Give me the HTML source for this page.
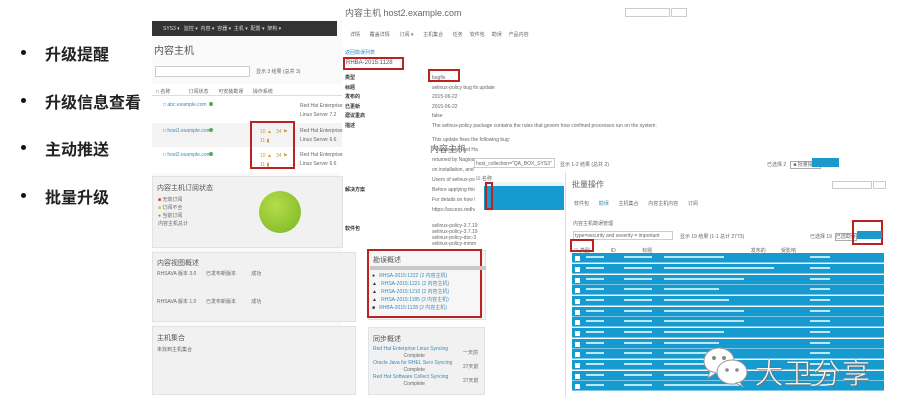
<!DOCTYPE html>
<html><head><meta charset="utf-8"><style>
*{margin:0;padding:0;box-sizing:border-box}
body{width:903px;height:413px;background:#fff;position:relative;overflow:hidden;font-family:"Liberation Sans","Noto Sans CJK SC",sans-serif;color:#444}
.a{position:absolute}
.b{font-size:16px;color:#222;font-weight:bold}
.dot{width:5px;height:5px;border-radius:50%;background:#111}
.s{font-size:5px;color:#666;white-space:nowrap}
.g{background:#f1f1f1;border:1px solid #e2e2e2}
.red{border:2px solid #b22;}
.lnk{color:#3a8ab8}
.row{position:absolute;left:0;width:312px;height:10px;background:#169bd0;border-bottom:1px solid #7cc8e6}
.row i{position:absolute;left:3px;top:3px;width:5px;height:5px;background:#fff}
.row b{position:absolute;top:3px;height:2px;background:#bfe6f5}
</style></head><body>
<!-- bullets -->
<div class="a dot" style="left:21px;top:50px"></div><div class="a b" style="left:45px;top:41px">升级提醒</div>
<div class="a dot" style="left:21px;top:98px"></div><div class="a b" style="left:45px;top:89px">升级信息查看</div>
<div class="a dot" style="left:21px;top:145px"></div><div class="a b" style="left:45px;top:136px">主动推送</div>
<div class="a dot" style="left:21px;top:193px"></div><div class="a b" style="left:45px;top:184px">批量升级</div>

<!-- left screenshot -->
<div class="a" style="left:152px;top:20px;width:190px;height:375px;background:#fafafa"></div>
<div class="a" style="left:152px;top:21px;width:185px;height:15px;background:#333"></div>
<div class="a s" style="left:163px;top:25px;color:#ddd">SYS3 ▾ &nbsp; 监控 ▾ &nbsp;内容 ▾ &nbsp;容器 ▾ &nbsp;主机 ▾ &nbsp;配置 ▾ &nbsp;架构 ▾</div>
<div class="a" style="left:154px;top:42px;font-size:10px;color:#555">内容主机</div>
<div class="a" style="left:155px;top:66px;width:95px;height:11px;border:1px solid #ccc;background:#fff"></div>
<div class="a s" style="left:256px;top:68px">显示 3 结果 (总共 3)</div>
<div class="a" style="left:152px;top:84px;width:190px;height:12px;border-bottom:1px solid #ddd;background:#fff"></div>
<div class="a s" style="left:156px;top:88px">□ 名称 &nbsp; &nbsp; &nbsp; &nbsp; &nbsp; &nbsp; 订阅状态 &nbsp; &nbsp; &nbsp; 可安装勘误 &nbsp; &nbsp; &nbsp; 操作系统</div>
<div class="a" style="left:152px;top:96px;width:190px;height:27px;background:#fff"></div>
<div class="a" style="left:152px;top:123px;width:190px;height:24px;background:#f3f3f3"></div>
<div class="a" style="left:152px;top:147px;width:190px;height:26px;background:#fff"></div>
<div class="a s lnk" style="left:163px;top:102px">□ abc.example.com</div>
<div class="a s lnk" style="left:163px;top:128px">□ host1.example.com</div>
<div class="a s lnk" style="left:163px;top:152px">□ host2.example.com</div>
<div class="a s" style="left:300px;top:102px;line-height:9px">Red Hat Enterprise<br>Linux Server 7.2</div>
<div class="a s" style="left:300px;top:127px;line-height:9px">Red Hat Enterprise<br>Linux Server 6.6</div>
<div class="a s" style="left:300px;top:151px;line-height:9px">Red Hat Enterprise<br>Linux Server 6.6</div>
<div class="a" style="left:209px;top:102px;width:4px;height:4px;border-radius:50%;background:#5a5"></div>
<div class="a" style="left:209px;top:128px;width:4px;height:4px;border-radius:50%;background:#5a5"></div>
<div class="a" style="left:209px;top:152px;width:4px;height:4px;border-radius:50%;background:#5a5"></div>
<div class="a red" style="left:250px;top:121px;width:45px;height:48px"></div>
<div class="a s" style="left:260px;top:128px;color:#c93;line-height:9px">10 ▲ &nbsp; 34 ⚑<br>11 ▮</div>
<div class="a s" style="left:260px;top:152px;color:#c93;line-height:9px">10 ▲ &nbsp; 34 ⚑<br>11 ▮</div>
<div class="a g" style="left:152px;top:176px;width:191px;height:72px"></div>
<div class="a" style="left:157px;top:183px;font-size:7px;color:#555">内容主机订阅状态</div>
<div class="a s" style="left:158px;top:196px;line-height:8px"><span style="color:#b33">■</span> 无效订阅<br><span style="color:#cc3">■</span> 订阅不全<br><span style="color:#5a5">●</span> 当前订阅<br>内容主机总计</div>
<div class="a" style="left:259px;top:191px;width:42px;height:42px;border-radius:50%;background:radial-gradient(circle at 40% 35%,#b4dc4a,#8cc12e 70%,#7aaa25)"></div>
<div class="a g" style="left:152px;top:252px;width:204px;height:70px"></div>
<div class="a" style="left:157px;top:258px;font-size:7px;color:#555">内容视图概述</div>
<div class="a s" style="left:157px;top:271px;line-height:7px">RHSAVA 版本 3.0 &nbsp; &nbsp; &nbsp; 已发布新版本 &nbsp; &nbsp; &nbsp; &nbsp; &nbsp; 成功<br>&nbsp;<br><br><br>RHSAVA 版本 1.0 &nbsp; &nbsp; &nbsp; 已发布新版本 &nbsp; &nbsp; &nbsp; &nbsp; &nbsp; 成功</div>
<div class="a g" style="left:152px;top:326px;width:204px;height:69px"></div>
<div class="a" style="left:157px;top:333px;font-size:7px;color:#555">主机集合</div>
<div class="a s" style="left:157px;top:346px">未找到主机集合</div>

<!-- middle details -->
<div class="a" style="left:345px;top:6px;font-size:9px;color:#666">内容主机 host2.example.com</div>
<div class="a" style="left:625px;top:8px;width:45px;height:9px;border:1px solid #ccc"></div>
<div class="a" style="left:671px;top:8px;width:16px;height:9px;border:1px solid #ccc"></div>
<div class="a s" style="left:350px;top:31px">详情 &nbsp; &nbsp; &nbsp; 覆盖详情 &nbsp; &nbsp; &nbsp; 订阅 ▾ &nbsp; &nbsp; &nbsp; 主机集合 &nbsp; &nbsp; &nbsp; 任务 &nbsp; &nbsp; 软件包 &nbsp; &nbsp; 勘误 &nbsp; &nbsp; 产品内容</div>
<div class="a s lnk" style="left:345px;top:49px">返回勘误列表</div>
<div class="a red" style="left:343px;top:57px;width:61px;height:13px"></div>
<div class="a" style="left:346px;top:60px;font-size:6px;color:#555">RHBA-2015:1128</div>
<div class="a red" style="left:428px;top:69px;width:32px;height:13px"></div>
<div class="a s" style="left:345px;top:74px;line-height:9.5px;font-weight:bold;color:#333">类型<br>标题<br>发布的<br>已更新<br>建议重启<br>描述</div>
<div class="a s" style="left:432px;top:74px;line-height:9.5px">bugfix<br>selinux-policy bug fix update<br>2015-06-22<br>2015-06-22<br>false<br>The selinux-policy package contains the rules that govern how confined processes run on the system.</div>
<div class="a s" style="left:432px;top:135px;line-height:10px">This update fixes the following bug:<br>* Previously, Red Ha<br>returned by Nagios<br>on installation, and<br>Users of selinux-poli<br>Before applying this<br>For details on how to<br>https://access.redha</div>
<div class="a s" style="left:345px;top:186px;font-weight:bold;color:#333">解决方案</div>
<div class="a s" style="left:345px;top:225px;font-weight:bold;color:#333">软件包</div>
<div class="a s" style="left:432px;top:223px;line-height:6px">selinux-policy-3.7.19<br>selinux-policy-3.7.19<br>selinux-policy-doc-3<br>selinux-policy-mmm</div>
<div class="a g" style="left:368px;top:250px;width:118px;height:70px;background:#f6f6f6"></div>
<div class="a red" style="left:367px;top:249px;width:115px;height:69px"></div>
<div class="a" style="left:373px;top:255px;font-size:7px;color:#555">勘误概述</div>
<div class="a" style="left:370px;top:266px;width:116px;height:4px;background:#c8c8c8"></div>
<div class="a s lnk" style="left:372px;top:272px;line-height:8px"><span style="color:#333">●</span> &nbsp; RHSA-2015:1222 (2 内容主机)<br><span style="color:#333">▲</span> &nbsp; RHSA-2015:1221 (2 内容主机)<br><span style="color:#333">▲</span> &nbsp; RHSA-2015:1210 (2 内容主机)<br><span style="color:#333">▲</span> &nbsp; RHSA-2015:1185 (2 内容主机)<br><span style="color:#333">■</span> &nbsp; RHBA-2015:1128 (2 内容主机)</div>
<div class="a g" style="left:368px;top:327px;width:117px;height:68px"></div>
<div class="a" style="left:373px;top:334px;font-size:7px;color:#555">同步概述</div>
<div class="a s lnk" style="left:373px;top:346px;line-height:7px">Red Hat Enterprise Linux Syncing<br><span style="color:#666">&nbsp; &nbsp; &nbsp; &nbsp; &nbsp; &nbsp; &nbsp; &nbsp; &nbsp; &nbsp; &nbsp; Complete</span><br>Oracle Java for RHEL Serv Syncing<br><span style="color:#666">&nbsp; &nbsp; &nbsp; &nbsp; &nbsp; &nbsp; &nbsp; &nbsp; &nbsp; &nbsp; &nbsp; Complete</span><br>Red Hat Software Collect Syncing<br><span style="color:#666">&nbsp; &nbsp; &nbsp; &nbsp; &nbsp; &nbsp; &nbsp; &nbsp; &nbsp; &nbsp; &nbsp; Complete</span></div>
<div class="a s" style="left:463px;top:346px;line-height:14px">一天前<br>27天前<br>27天前</div>

<!-- overlay host list -->
<div class="a" style="left:430px;top:142px;font-size:9px;color:#666">内容主机</div>
<div class="a" style="left:474px;top:158px;width:81px;height:10px;border:1px solid #ccc;background:#fff"></div>
<div class="a s" style="left:476px;top:161px">host_collection="QA_BOX_SYS3"</div>
<div class="a s" style="left:560px;top:161px">显示 1-2 结果 (总共 2)</div>
<div class="a s" style="left:767px;top:161px">已选择 2 &nbsp; <span style="border:1px solid #aaa;padding:0 2px">■ 批量操作</span></div>
<div class="a" style="left:812px;top:158px;width:27px;height:9px;background:#1d98cc"></div>
<div class="a" style="left:475px;top:172px;width:90px;height:40px;background:#fff"></div>
<div class="a s" style="left:476px;top:175px">☑ 名称</div>
<div class="a" style="left:484px;top:182px;width:80px;height:28px;background:#169bd0"></div>
<div class="a" style="left:484px;top:182px;width:80px;height:4px;background:#e8f4fa"></div>
<div class="a red" style="left:485px;top:182px;width:8px;height:28px;border-color:#b22"></div>

<!-- batch panel -->
<div class="a" style="left:565px;top:172px;width:338px;height:225px;background:#fff;border-left:1px solid #ddd"></div>
<div class="a" style="left:572px;top:179px;font-size:8px;color:#666">批量操作</div>
<div class="a" style="left:832px;top:181px;width:40px;height:8px;border:1px solid #ccc"></div>
<div class="a" style="left:873px;top:181px;width:13px;height:8px;border:1px solid #ccc"></div>
<div class="a s" style="left:574px;top:200px">软件包 &nbsp; &nbsp; &nbsp; <span class="lnk">勘误</span> &nbsp; &nbsp; &nbsp; 主机集合 &nbsp; &nbsp; &nbsp; 内容主机内容 &nbsp; &nbsp; &nbsp; 订阅</div>
<div class="a s" style="left:573px;top:220px">内容主机勘误管理</div>
<div class="a" style="left:573px;top:231px;width:100px;height:9px;border:1px solid #ccc"></div>
<div class="a s" style="left:575px;top:233px">type=security and severity = important</div>
<div class="a s" style="left:680px;top:233px">显示 19 结果 (1-1 总计 2773)</div>
<div class="a s" style="left:810px;top:233px">已选择 19 &nbsp;<span style="border:1px solid #aaa">已选勘误</span></div>
<div class="a red" style="left:852px;top:220px;width:31px;height:25px"></div>
<div class="a" style="left:857px;top:231px;width:25px;height:8px;background:#1d98cc"></div>
<div class="a red" style="left:570px;top:239px;width:24px;height:13px"></div>
<div class="a s" style="left:574px;top:247px">☑ 类型 &nbsp; &nbsp; &nbsp; &nbsp; &nbsp; &nbsp; &nbsp; ID &nbsp; &nbsp; &nbsp; &nbsp; &nbsp; &nbsp; &nbsp; &nbsp; &nbsp; 标题 &nbsp; &nbsp; &nbsp; &nbsp; &nbsp; &nbsp; &nbsp; &nbsp; &nbsp; &nbsp; &nbsp; &nbsp; &nbsp; &nbsp; &nbsp; &nbsp; &nbsp; &nbsp; &nbsp; &nbsp; &nbsp; &nbsp; &nbsp; &nbsp; &nbsp; &nbsp; &nbsp; &nbsp; &nbsp; &nbsp; &nbsp; &nbsp; &nbsp; &nbsp; &nbsp; 发布的 &nbsp; &nbsp; &nbsp; &nbsp; &nbsp; 受影响</div>
<div class="a" style="left:572px;top:253px;width:312px;height:142px;overflow:hidden">
<div class="row" style="top:0"><i></i><b style="left:14px;width:18px"></b><b style="left:52px;width:28px"></b><b style="left:92px;width:60px"></b><b style="left:238px;width:20px"></b></div>
<div class="row" style="top:11px"><i></i><b style="left:14px;width:18px"></b><b style="left:52px;width:28px"></b><b style="left:92px;width:110px"></b><b style="left:238px;width:20px"></b></div>
<div class="row" style="top:22px"><i></i><b style="left:14px;width:18px"></b><b style="left:52px;width:28px"></b><b style="left:92px;width:80px"></b><b style="left:238px;width:20px"></b></div>
<div class="row" style="top:32px"><i></i><b style="left:14px;width:18px"></b><b style="left:52px;width:28px"></b><b style="left:92px;width:55px"></b><b style="left:238px;width:20px"></b></div>
<div class="row" style="top:43px"><i></i><b style="left:14px;width:18px"></b><b style="left:52px;width:28px"></b><b style="left:92px;width:65px"></b><b style="left:238px;width:20px"></b></div>
<div class="row" style="top:54px"><i></i><b style="left:14px;width:18px"></b><b style="left:52px;width:28px"></b><b style="left:92px;width:80px"></b><b style="left:238px;width:20px"></b></div>
<div class="row" style="top:64px"><i></i><b style="left:14px;width:18px"></b><b style="left:52px;width:28px"></b><b style="left:92px;width:80px"></b><b style="left:238px;width:20px"></b></div>
<div class="row" style="top:75px"><i></i><b style="left:14px;width:18px"></b><b style="left:52px;width:28px"></b><b style="left:92px;width:60px"></b><b style="left:238px;width:20px"></b></div>
<div class="row" style="top:86px"><i></i><b style="left:14px;width:18px"></b><b style="left:52px;width:28px"></b><b style="left:92px;width:55px"></b><b style="left:238px;width:20px"></b></div>
<div class="row" style="top:96px"><i></i><b style="left:14px;width:18px"></b><b style="left:52px;width:28px"></b><b style="left:92px;width:50px"></b><b style="left:238px;width:20px"></b></div>
<div class="row" style="top:107px"><i></i><b style="left:14px;width:18px"></b><b style="left:52px;width:28px"></b><b style="left:92px;width:50px"></b><b style="left:238px;width:20px"></b></div>
<div class="row" style="top:118px"><i></i><b style="left:14px;width:18px"></b><b style="left:52px;width:28px"></b><b style="left:92px;width:45px"></b><b style="left:238px;width:20px"></b></div>
<div class="row" style="top:128px"><i></i><b style="left:14px;width:18px"></b><b style="left:52px;width:28px"></b><b style="left:92px;width:75px"></b><b style="left:238px;width:20px"></b></div>
</div>

<!-- watermark -->
<svg class="a" style="left:702px;top:346px" width="50" height="42" viewBox="0 0 50 42">
<ellipse cx="17" cy="15" rx="15" ry="13" fill="#fff" stroke="#999" stroke-width="1"/>
<path d="M8 25 L6 32 L14 27Z" fill="#fff" stroke="#999" stroke-width="1"/>
<ellipse cx="30" cy="26" rx="15" ry="12" fill="#fff" stroke="#999" stroke-width="1"/>
<path d="M38 36 L41 41 L34 37Z" fill="#fff" stroke="#999"/>
<circle cx="12" cy="12" r="2" fill="#888"/><circle cx="22" cy="12" r="2" fill="#888"/>
<circle cx="25" cy="24" r="1.8" fill="#888"/><circle cx="35" cy="24" r="1.8" fill="#888"/>
</svg>
<div class="a" style="left:755px;top:352px;font-size:28px;color:#fff;letter-spacing:1px;font-family:'Noto Sans CJK SC',sans-serif;font-weight:300;text-shadow:0 0 1px #666,0 0 1px #666,1px 1px 1px #777">大卫分享</div>
</body></html>
